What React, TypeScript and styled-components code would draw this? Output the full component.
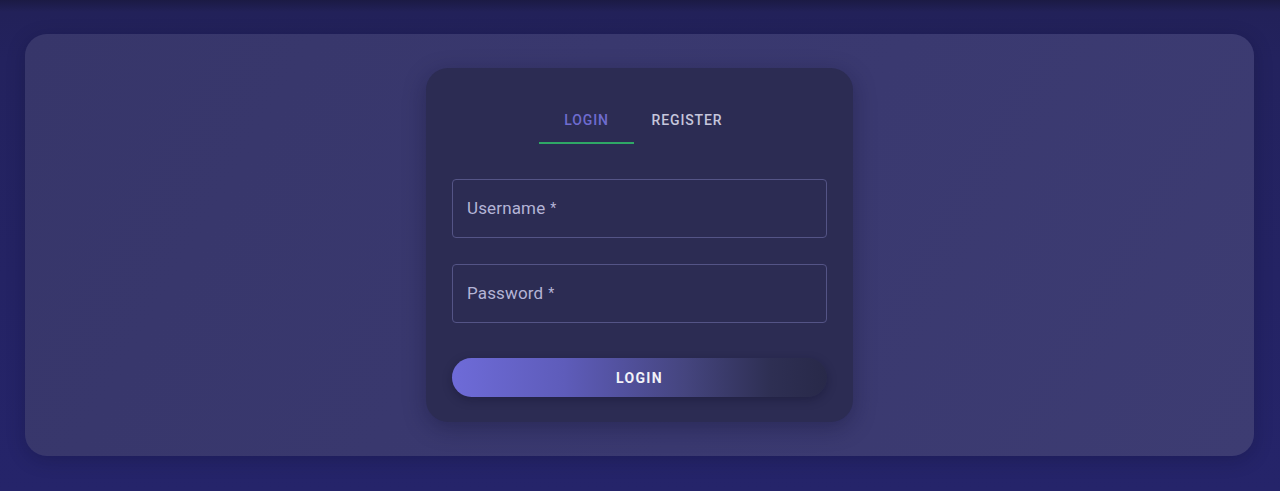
import React, { useState } from 'react';
import styled, { createGlobalStyle } from 'styled-components';

const Global = createGlobalStyle`
  html, body {
    margin: 0;
    padding: 0;
    height: 100%;
  }
  body {
    font-family: Roboto, "Liberation Sans", sans-serif;
    background: #23225c;
  }
`;

const Page = styled.div`
  width: 1280px;
  height: 491px;
  box-sizing: border-box;
  padding: 34px 26px 35px 25px;
  background: linear-gradient(180deg, #1b1a44 0px, #222159 12px, #23225e 60px, #25246a 100%);
  display: flex;
`;

const Panel = styled.div`
  flex: 1;
  border-radius: 22px;
  background: linear-gradient(120deg, #37366a 0%, #3a3970 60%, #3d3c72 100%);
  box-shadow: 0 4px 18px rgba(10, 10, 40, 0.25);
  display: flex;
  justify-content: center;
  align-items: flex-start;
  padding-top: 34px;
`;

const Card = styled.div`
  width: 427px;
  box-sizing: border-box;
  padding: 28px 26px 25px;
  border-radius: 22px;
  background: #2c2c53;
  box-shadow: 0 6px 22px rgba(15, 15, 45, 0.35);
  display: flex;
  flex-direction: column;
`;

const Tabs = styled.div`
  display: flex;
  justify-content: center;
  height: 48px;
  margin-bottom: 35px;
`;

const Tab = styled.button<{ $active?: boolean }>`
  position: relative;
  background: none;
  border: none;
  padding: 0 16px;
  min-width: ${p => (p.$active ? '95px' : '106px')};
  font-family: Roboto, "Liberation Sans", sans-serif;
  font-size: 14px;
  font-weight: 500;
  letter-spacing: 0.9px;
  color: ${p => (p.$active ? '#6f6cd0' : '#c6c6dc')};
  cursor: pointer;

  &::after {
    content: '';
    display: ${p => (p.$active ? 'block' : 'none')};
    position: absolute;
    left: 0;
    right: 0;
    bottom: 0;
    height: 2px;
    background: #2fa866;
  }
`;

const Field = styled.label`
  height: 59px;
  box-sizing: border-box;
  border: 1px solid #545486;
  border-radius: 4px;
  display: flex;
  align-items: center;
  padding: 0 14px 2px;
  margin-bottom: 26px;
  font-size: 17px;
  color: #b4b4d6;
  letter-spacing: 0.15px;
`;

const Star = styled.span`
  margin-left: 5px;
  font-size: 14px;
`;

const Submit = styled.button`
  margin-top: 9px;
  height: 39px;
  border: none;
  border-radius: 20px;
  background: linear-gradient(90deg, #6e6bd8 0%, #5e5cba 30%, #45457f 62%, #2e2f53 85%, #282949 100%);
  box-shadow: 0 3px 10px rgba(15, 15, 40, 0.35);
  color: #f2f2f8;
  font-family: Roboto, "Liberation Sans", sans-serif;
  font-size: 14px;
  font-weight: 700;
  letter-spacing: 1.3px;
  cursor: pointer;
`;

export default function App() {
  const [tab, setTab] = useState('login');
  return (
    <>
      <Global />
      <Page>
        <Panel>
          <Card>
            <Tabs>
              <Tab $active={tab === 'login'} onClick={() => setTab('login')}>LOGIN</Tab>
              <Tab $active={tab === 'register'} onClick={() => setTab('register')}>REGISTER</Tab>
            </Tabs>
            <Field>Username<Star>*</Star></Field>
            <Field>Password<Star>*</Star></Field>
            <Submit>LOGIN</Submit>
          </Card>
        </Panel>
      </Page>
    </>
  );
}
